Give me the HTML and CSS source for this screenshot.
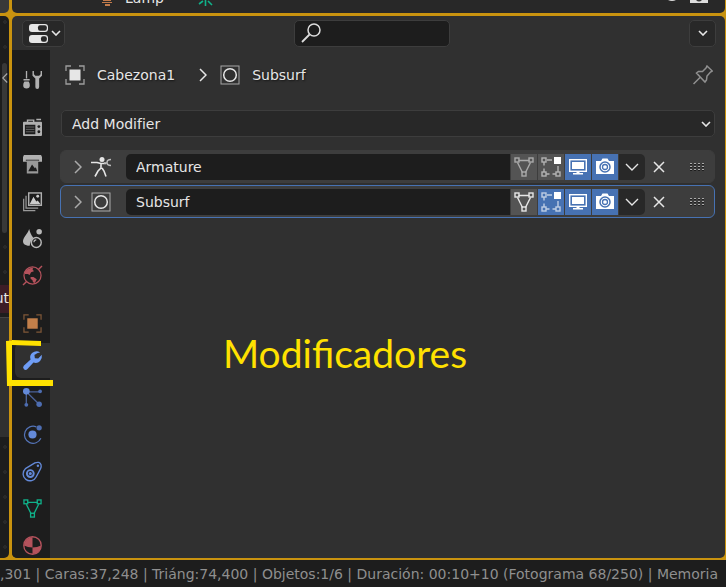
FILE: index.html
```html
<!DOCTYPE html>
<html lang="es">
<head>
    <meta charset="UTF-8">
    <meta name="viewport" content="width=device-width, initial-scale=1.0">
    <title>Modificadores</title>
    <link rel="stylesheet" href="styles.css">
</head>
<body>
    <!-- Shared icons -->
    <svg class="sprite" aria-hidden="true">
        <symbol id="i-down" viewBox="0 0 10 6"><path d="M1 1l4 4 4-4" fill="none" stroke="currentColor" stroke-width="1.6"/></symbol>
        <symbol id="i-down-lg" viewBox="0 0 14 8"><path d="M1 1l6 6 6-6" fill="none" stroke="currentColor" stroke-width="1.4"/></symbol>
        <symbol id="i-right" viewBox="0 0 8 14"><path d="M1 1l6 6-6 6" fill="none" stroke="currentColor" stroke-width="1.5"/></symbol>
        <symbol id="i-subsurf" viewBox="0 0 20 20"><rect x="1" y="1" width="18" height="18" fill="none" stroke="currentColor" opacity=".65"/><circle cx="10" cy="10" r="6.3" fill="none" stroke="currentColor" stroke-width="1.5"/></symbol>
        <symbol id="i-object" viewBox="0 0 20 20"><path d="M1 6V1h5M14 1h5v5M19 14v5h-5M6 19H1v-5" fill="none" stroke="currentColor" stroke-width="1.3" opacity=".6"/><rect x="4.500" y="4.500" width="11" height="11" fill="currentColor"/></symbol>
        <symbol id="i-cage" viewBox="0 0 20 20"><g fill="none" stroke="currentColor" stroke-width="1.4"><path d="M4.500 3.500h11M3.500 5.500l5 10M16.500 5.500l-5 10"/><rect x="1" y="1" width="4" height="4"/><rect x="15" y="1" width="4" height="4"/><rect x="8" y="15" width="4" height="4"/></g></symbol>
        <symbol id="i-edit" viewBox="0 0 20 20"><g fill="none" stroke="currentColor" stroke-width="1.4" opacity=".65"><rect x="1" y="1" width="4" height="4"/><rect x="1" y="15" width="4" height="4"/><rect x="15" y="15" width="4" height="4"/><path d="M3 5v3.500M3 11.500V15M5 17h3.500M11.500 17H15M17 15V9M6 3h5"/></g><rect x="13" y="0" width="7" height="7" fill="#fff"/></symbol>
        <symbol id="i-screen" viewBox="0 0 20 20"><rect x="1.700" y="2.700" width="16.600" height="11.600" fill="none" stroke="currentColor" stroke-width="1.4"/><rect x="4" y="5" width="12" height="7" fill="currentColor"/><path d="M8.500 14h3v2H15v1.500H5V16h3.500z" fill="currentColor"/></symbol>
        <symbol id="i-camera" viewBox="0 0 20 20"><path d="M1 4h5l1.500-2.500h5L14 4h5v13H1z" fill="currentColor"/><circle cx="10" cy="10" r="5" fill="none" stroke="#4772b3" stroke-width="1.5"/><circle cx="10" cy="10" r="2.500" fill="none" stroke="#4772b3" stroke-width="1.300"/></symbol>
        <symbol id="i-close" viewBox="0 0 12 12"><path d="M1 1l10 10M11 1L1 11" stroke="currentColor" stroke-width="1.5"/></symbol>
        <symbol id="i-grip" viewBox="0 0 16 8"><g stroke-width="1.5" stroke-dasharray="2 2"><path d="M1 1h14M1 4h14M1 7h14" stroke="#151515"/><path d="M1 0.500h14M1 3.500h14M1 6.500h14" stroke="#aaa" stroke-width="1.2"/></g></symbol>
    </svg>

    <main class="workspace">
        <section class="area viewport"></section>

        <section class="area outliner">
            <svg class="outliner-lamp" viewBox="0 0 10 6"><path d="M1 0h8v1H1zM0 2h10v1H0zM3 4h5v2H3z" fill="#c27b4b"/></svg>
            <span class="outliner-name">Lamp</span>
            <svg class="outliner-data" viewBox="0 0 16 6"><path d="M7.500 0v6M5 1L1 4M10 1l4 4" stroke="#10b28a" stroke-width="1.6"/></svg>
            <svg class="outliner-toggles" viewBox="0 0 42 4"><path d="M1 0q4 2 8 0z" fill="#ddd"/><path d="M23 0h18v3H23z" fill="#ddd"/><path d="M29 0q3 3 6 0z" fill="#333"/></svg>
        </section>

        <section class="area nodes">
            <div class="node-scroll">
                <svg class="chev-left" viewBox="0 0 8 14"><path d="M7 1L1 7l6 6" fill="none" stroke="#aaa" stroke-width="1.5"/></svg>
            </div>
            <div class="node-head">ut</div>
            <div class="node-body"></div>
        </section>

        <section class="area properties">
            <header class="prop-header">
                <button class="editor-type" aria-label="Editor type">
                    <svg width="19" height="19" viewBox="0 0 19 19"><rect width="19" height="8" rx="3" fill="#e6e6e6"/><rect x="9" y="1.200" width="8.800" height="5.600" rx="2" fill="#282828"/><rect y="11" width="19" height="8" rx="3" fill="#e6e6e6"/><rect x="12" y="12.200" width="5.800" height="5.600" rx="2" fill="#282828"/></svg>
                    <svg width="10" height="6"><use href="#i-down"/></svg>
                </button>
                <label class="search">
                    <svg width="20" height="20" viewBox="0 0 20 20"><circle cx="13" cy="7" r="6" fill="none" stroke="#ddd" stroke-width="1.5"/><path d="M8.500 11.500L1 19" stroke="#ddd" stroke-width="1.8"/></svg>
                    <input type="text" aria-label="Search">
                </label>
                <button class="options" aria-label="Options"><svg width="10" height="6"><use href="#i-down"/></svg></button>
            </header>

            <div class="prop-main">
                <nav class="tabs">
                    <button class="tab group-end" aria-label="Tool">
                        <svg viewBox="0 0 20 20" fill="#b0b0b0"><path d="M3 1h1.400v8H3zM.5 9.500h6.500v1.600H.5zM1.500 12h4.500q1.200 1.500 1.200 4 0 3.500-3.500 3.500T.2 16q0-2.500 1.300-4zM10 1v5l3 3v9q0 2 2 2t2-2V9l3-3V1h-1.500v3.500L17 6h-4l-1.500-1.500V1z"/></svg>
                    </button>
                    <button class="tab" aria-label="Render">
                        <svg viewBox="0 0 20 20"><path d="M2 4h2V1.500h8V4h7q1 0 1 1v13q0 1-1 1H1q-1 0-1-1V5q0-1 1-1z" fill="#b0b0b0"/><path d="M14 1.500h5" stroke="#b0b0b0" stroke-width="1.5"/><path d="M5.500 3h5v1h-5zM2 7h11v10H2z" fill="#1d1d1d"/><path d="M3 9.500h9M3 12h9M3 14.500h9" stroke="#666"/><circle cx="16.700" cy="9" r="1.500" fill="#1d1d1d"/><circle cx="16.700" cy="14.500" r="1.500" fill="#1d1d1d"/></svg>
                    </button>
                    <button class="tab" aria-label="Output">
                        <svg viewBox="0 0 20 20"><path d="M1 0h18l1 2v5H0V2z" fill="#b0b0b0"/><path d="M3 5.500h14" stroke="#1d1d1d"/><path d="M4 6h12v13.500H4z" fill="#999"/><path d="M5.500 17l4-7 3 4 1-1 1.500 4z" fill="#1d1d1d"/></svg>
                    </button>
                    <button class="tab" aria-label="View layer">
                        <svg viewBox="0 0 20 20"><path d="M.7 7v12.500H13M3.200 4v13H16" fill="none" stroke="#999" stroke-width="1.3"/><rect x="6" y="1" width="13.300" height="13" fill="#1d1d1d" stroke="#b0b0b0" stroke-width="1.5"/><path d="M7 13l4-8 3 5 1.500-1 3 4z" fill="#ccc"/><circle cx="15.500" cy="4.500" r="1.500" fill="#ccc"/></svg>
                    </button>
                    <button class="tab" aria-label="Scene">
                        <svg viewBox="0 0 20 20"><path d="M6.500 0C5 5 0 9 0 13q0 4 5 4.500h2q1-6 4-8C8 6 7.500 3 6.500 0z" fill="#b8b8b8"/><circle cx="17" cy="3" r="2.900" fill="#b8b8b8"/><circle cx="14" cy="14.200" r="5.200" fill="none" stroke="#b8b8b8" stroke-width="1.5"/><path d="M11.500 14a2.500 2.500 0 0 1 2.500-2.500" fill="none" stroke="#b8b8b8" stroke-width="1.200"/></svg>
                    </button>
                    <button class="tab group-end" aria-label="World">
                        <svg viewBox="0 0 20 20"><circle cx="10" cy="10" r="9" fill="none" stroke="#b5525c" stroke-width="1.3"/><path d="M16.500 3.500L20 0M0 20l3.500-3.500" stroke="#b5525c" stroke-width="1.500"/><path d="M2 6q3-4 9-4.500l-1 2 1.500 2-3 1-1.500 3-2-1-3 0zM8 11.500l3 0 3.500 2.500-2 4-2-1-.5-2-2-1.500z" fill="#b5525c"/></svg>
                    </button>
                    <button class="tab tab-object" aria-label="Object">
                        <svg><use href="#i-object"/></svg>
                    </button>
                    <button class="tab active" aria-label="Modifiers">
                        <svg viewBox="0 0 20 20"><path d="M18 1.500Q14-1 9.500 2 6.500 5 8 9L.8 15.500q-1.500 2 .2 3.700 1.800 1.500 3.700-.2L11 12q4 1.500 7-1.500 2.500-3 1.800-6.500L16 8l-3.500-.5L12 4q0 0 3.500-2z" fill="#6f9df5"/></svg>
                    </button>
                    <button class="tab" aria-label="Particles">
                        <svg viewBox="0 0 20 20"><path d="M3.500 4h14M3.500 4v14M3.500 4L17 17" stroke="#4b6299" stroke-width="1.4"/><circle cx="3.500" cy="3.500" r="3.500" fill="#6389d8"/><circle cx="18" cy="3.500" r="2" fill="#4d6db1"/><circle cx="3.500" cy="17.700" r="2" fill="#4d6db1"/><circle cx="17" cy="17" r="2.900" fill="#4d6db1"/></svg>
                    </button>
                    <button class="tab" aria-label="Physics">
                        <svg viewBox="0 0 20 20"><path d="M14 2a9 9 0 1 0 4.800 12" fill="none" stroke="#5474b8" stroke-width="1.3"/><circle cx="10" cy="10" r="4.300" fill="#6389d8"/><circle cx="17" cy="3" r="2.800" fill="#4d6db1"/></svg>
                    </button>
                    <button class="tab" aria-label="Constraints">
                        <svg viewBox="0 0 20 20"><path d="M2.500 7L12.500 1q5-2 6.500 2 .5 2-.5 4L14 15.500A7.300 7.300 0 1 1 2.500 7z" fill="none" stroke="#6389d8" stroke-width="1.4"/><circle cx="7.700" cy="12.200" r="3.600" fill="none" stroke="#6389d8" stroke-width="2"/><circle cx="7.700" cy="12.200" r="1.600" fill="#6389d8"/><circle cx="15.700" cy="4" r="1.300" fill="#6389d8"/></svg>
                    </button>
                    <button class="tab tab-data" aria-label="Object data">
                        <svg><use href="#i-cage"/></svg>
                    </button>
                    <button class="tab" aria-label="Material">
                        <svg viewBox="0 0 20 20"><circle cx="10" cy="10" r="9.200" fill="#1d1d1d" stroke="#b5525c" stroke-width="1.4"/><path d="M10 1v11q-5 0-9-2Q2 2 10 1zM10 12q5 0 9-2 0 8-9 9z" fill="#b5525c"/></svg>
                    </button>
                </nav>

                <div class="content">
                    <div class="crumbs">
                        <svg class="icon"><use href="#i-object"/></svg>
                        <span class="crumb">Cabezona1</span>
                        <svg class="crumb-sep" width="8" height="14"><use href="#i-right"/></svg>
                        <svg class="icon"><use href="#i-subsurf"/></svg>
                        <span class="crumb">Subsurf</span>
                        <button class="pin" aria-label="Pin">
                            <svg width="20" height="20" viewBox="0 0 20 20"><path d="M14 1l5.300 5-1.800 1-3.500 4-.5 4-1.500 2L3.500 8l2-1.500h4L13 3zM7 12.500L.5 19" fill="none" stroke="#909090" stroke-width="1.500"/></svg>
                        </button>
                    </div>

                    <div class="add-modifier">
                        <select aria-label="Add Modifier"><option>Add Modifier</option></select>
                        <svg width="10" height="6"><use href="#i-down"/></svg>
                    </div>

                    <div class="modifier">
                        <button class="expand" aria-label="Expand"><svg width="8" height="14"><use href="#i-right"/></svg></button>
                        <svg class="icon" viewBox="0 0 20 20"><circle cx="11" cy="2.500" r="2.500" fill="#e6e6e6"/><path d="M0 5.500h6l4 1h5M10 6v6M10 11l-3 3-3 5.500M11 11l2 3 2 5.500" fill="none" stroke="#e6e6e6" stroke-width="1.600"/><path d="M20 2.500q-4 0-4 3t4 3M13 6h3" fill="none" stroke="#bbb" stroke-width="1.500"/></svg>
                        <input class="name" type="text" value="Armature" aria-label="Modifier name">
                        <div class="toggles">
                            <button class="toggle dim" aria-label="On cage"><svg><use href="#i-cage"/></svg></button>
                            <button class="toggle" aria-label="Edit mode"><svg><use href="#i-edit"/></svg></button>
                            <button class="toggle on" aria-label="Realtime"><svg><use href="#i-screen"/></svg></button>
                            <button class="toggle on" aria-label="Render"><svg><use href="#i-camera"/></svg></button>
                            <button class="toggle menu" aria-label="More"><svg class="chev"><use href="#i-down-lg"/></svg></button>
                        </div>
                        <button class="close" aria-label="Remove"><svg width="12" height="12"><use href="#i-close"/></svg></button>
                        <svg class="grip" width="16" height="8"><use href="#i-grip"/></svg>
                    </div>

                    <div class="modifier selected">
                        <button class="expand" aria-label="Expand"><svg width="8" height="14"><use href="#i-right"/></svg></button>
                        <svg class="icon"><use href="#i-subsurf"/></svg>
                        <input class="name" type="text" value="Subsurf" aria-label="Modifier name">
                        <div class="toggles">
                            <button class="toggle" aria-label="On cage"><svg><use href="#i-cage"/></svg></button>
                            <button class="toggle on" aria-label="Edit mode"><svg><use href="#i-edit"/></svg></button>
                            <button class="toggle on" aria-label="Realtime"><svg><use href="#i-screen"/></svg></button>
                            <button class="toggle on" aria-label="Render"><svg><use href="#i-camera"/></svg></button>
                            <button class="toggle menu" aria-label="More"><svg class="chev"><use href="#i-down-lg"/></svg></button>
                        </div>
                        <button class="close" aria-label="Remove"><svg width="12" height="12"><use href="#i-close"/></svg></button>
                        <svg class="grip" width="16" height="8"><use href="#i-grip"/></svg>
                    </div>
                </div>
            </div>
        </section>

        <!-- Annotations drawn over the editor -->
        <svg class="mark" viewBox="0 0 48 46"><path d="M0 1l6-.5V40h41v6H1zM6 0l29 1v5L6 5z" fill="#ffe100"/></svg>
        <p class="note">Modificadores</p>
    </main>

    <footer class="status">,301 | Caras:37,248 | Triáng:74,400 | Objetos:1/6 | Duración: 00:10+10 (Fotograma 68/250) | Memoria</footer>
</body>
</html>
```
FILE: styles.css
```css
:root {
    --gold: #c9930f;
    --panel: #303030;
    --dark: #1d1d1d;
    --button: #282828;
    --line: #3d3d3d;
    --blue: #4772b3;
    --text: #e6e6e6;
}

* {
    margin: 0;
    padding: 0;
    box-sizing: border-box;
}

body {
    height: 100vh;
    display: flex;
    flex-direction: column;
    overflow: hidden;
    background: var(--dark);
    color: var(--text);
    font-family: "DejaVu Sans", sans-serif;
    font-size: 14px;
}

button,
input,
select {
    font: inherit;
    color: inherit;
    border: none;
    background: none;
    outline: none;
}

button {
    display: flex;
    align-items: center;
    justify-content: center;
}

svg {
    display: block;
    flex: none;
}

.sprite {
    position: absolute;
    width: 0;
    height: 0;
}

.icon {
    width: 20px;
    height: 20px;
}

/* Areas */
.workspace {
    position: relative;
    flex: 1;
    min-height: 0;
    display: grid;
    grid-template: 13px minmax(0, 1fr) / 9px minmax(0, 1fr);
    gap: 3px;
    padding: 0 1px 2px 0;
    background: var(--gold);
}

.area {
    overflow: hidden;
    background: var(--panel);
}

.viewport {
    background: #393939;
    border-radius: 0 0 5px 0;
}

.outliner {
    display: flex;
    align-items: flex-start;
    padding: 0 16px 0 90px;
    background: var(--button);
    border-radius: 0 0 5px 5px;
}

.outliner-lamp {
    width: 10px;
    height: 6px;
}

.outliner-name {
    margin: -11px 34px 0 13px;
    line-height: 18px;
}

.outliner-data {
    width: 16px;
    height: 6px;
}

.outliner-toggles {
    width: 42px;
    height: 4px;
    margin-left: auto;
}

/* Node editor edge */
.nodes {
    display: flex;
    flex-direction: column;
    padding-top: 47px;
    background: radial-gradient(circle at 5px 6px, #292929 2px, transparent 2px) 0 0 / 9px 25px, var(--dark);
    border-radius: 0 5px 5px 0;
}

.node-scroll {
    height: 170px;
    width: 5px;
    margin-left: 2px;
    padding-top: 9px;
    background: #383838;
    border-radius: 3px;
}

.chev-left {
    width: 6px;
    height: 12px;
}

.node-head {
    height: 28px;
    margin: 52px 0 4px;
    overflow: hidden;
    background: #3c1d26;
    line-height: 26px;
    direction: rtl;
}

.node-body {
    height: 120px;
    background: var(--panel);
    border-top: 1px solid #444;
}

/* Properties editor */
.properties {
    display: flex;
    flex-direction: column;
    border-radius: 5px;
}

.prop-header {
    display: grid;
    grid-template-columns: 272px 156px 1fr;
    align-items: center;
    height: 34px;
    padding: 0 9px 0 10px;
}

.editor-type,
.options {
    height: 27px;
    background: var(--button);
    border: 1px solid var(--line);
    border-radius: 5px;
}

.editor-type {
    width: 43px;
    gap: 3px;
    padding-left: 2px;
}

.options {
    width: 27px;
    justify-self: end;
}

.search {
    display: flex;
    align-items: center;
    height: 27px;
    padding: 0 6px;
    background: var(--dark);
    border: 1px solid var(--line);
    border-radius: 5px;
}

.search input {
    flex: 1;
    min-width: 0;
}

.prop-main {
    flex: 1;
    min-height: 0;
    display: flex;
}

.tabs {
    width: 38px;
    padding: 12px 0 0 3px;
    background: var(--dark);
    overflow: hidden;
}

.tab {
    width: 35px;
    height: 35px;
    margin-bottom: 2px;
    border-radius: 6px 0 0 6px;
}

.tab svg {
    width: 19px;
    height: 19px;
    overflow: visible;
}

.tab.group-end {
    margin-bottom: 13px;
}

.tab.active {
    background: var(--panel);
}

.tab-object {
    color: #c27f4a;
}

.tab-data {
    color: #10b28a;
}

.content {
    flex: 1;
    min-width: 0;
    padding: 12px 10px 0;
}

.crumbs {
    display: flex;
    align-items: center;
    height: 26px;
    padding: 0 2px 0 5px;
    text-shadow: 1px 1px 2px rgba(0, 0, 0, 0.6);
}

.crumb {
    margin-left: 12px;
}

.crumb-sep {
    margin: 0 13px 0 24px;
}

.pin {
    margin-left: auto;
}

.add-modifier {
    position: relative;
    margin: 22px 0 13px 1px;
}

.add-modifier select {
    display: block;
    width: 100%;
    height: 27px;
    padding: 0 10px;
    appearance: none;
    background: var(--button);
    border: 1px solid var(--line);
    border-radius: 5px;
}

.add-modifier svg {
    position: absolute;
    top: 11px;
    right: 4px;
}

/* Modifier rows */
.modifier {
    display: flex;
    align-items: center;
    height: 33px;
    margin-bottom: 2px;
    padding: 1px 9px 0 13px;
    background: #3d3d3d;
    border: 1px solid #3d3d3d;
    border-radius: 6px;
}

.modifier.selected {
    border-color: var(--blue);
}

.expand {
    margin-right: 9px;
    color: #aaa;
}

.name {
    flex: 1;
    min-width: 0;
    height: 26px;
    margin-left: 15px;
    padding: 0 10px;
    background: var(--dark);
    border-radius: 5px 0 0 5px;
}

.toggles {
    display: flex;
    gap: 1px;
    padding-left: 1px;
}

.toggle {
    width: 26px;
    height: 26px;
    background: #545454;
}

.toggle svg {
    width: 20px;
    height: 20px;
}

.toggle .chev {
    width: 14px;
    height: 8px;
}

.toggle.dim {
    color: #aaa;
}

.toggle.on {
    background: var(--blue);
    color: #fff;
}

.toggle.menu {
    background: var(--button);
    border-radius: 0 5px 5px 0;
}

.close {
    margin: 0 24px 0 8px;
}

/* Annotations */
.mark {
    position: absolute;
    left: 6px;
    top: 340px;
    width: 48px;
    height: 46px;
}

.note {
    position: absolute;
    left: 223px;
    top: 329px;
    color: #ffe100;
    font-family: Lato, sans-serif;
    font-size: 39px;
    line-height: 48px;
}

.status {
    height: 27px;
    overflow: hidden;
    color: #8f8f8f;
    line-height: 28px;
    white-space: nowrap;
}
```
